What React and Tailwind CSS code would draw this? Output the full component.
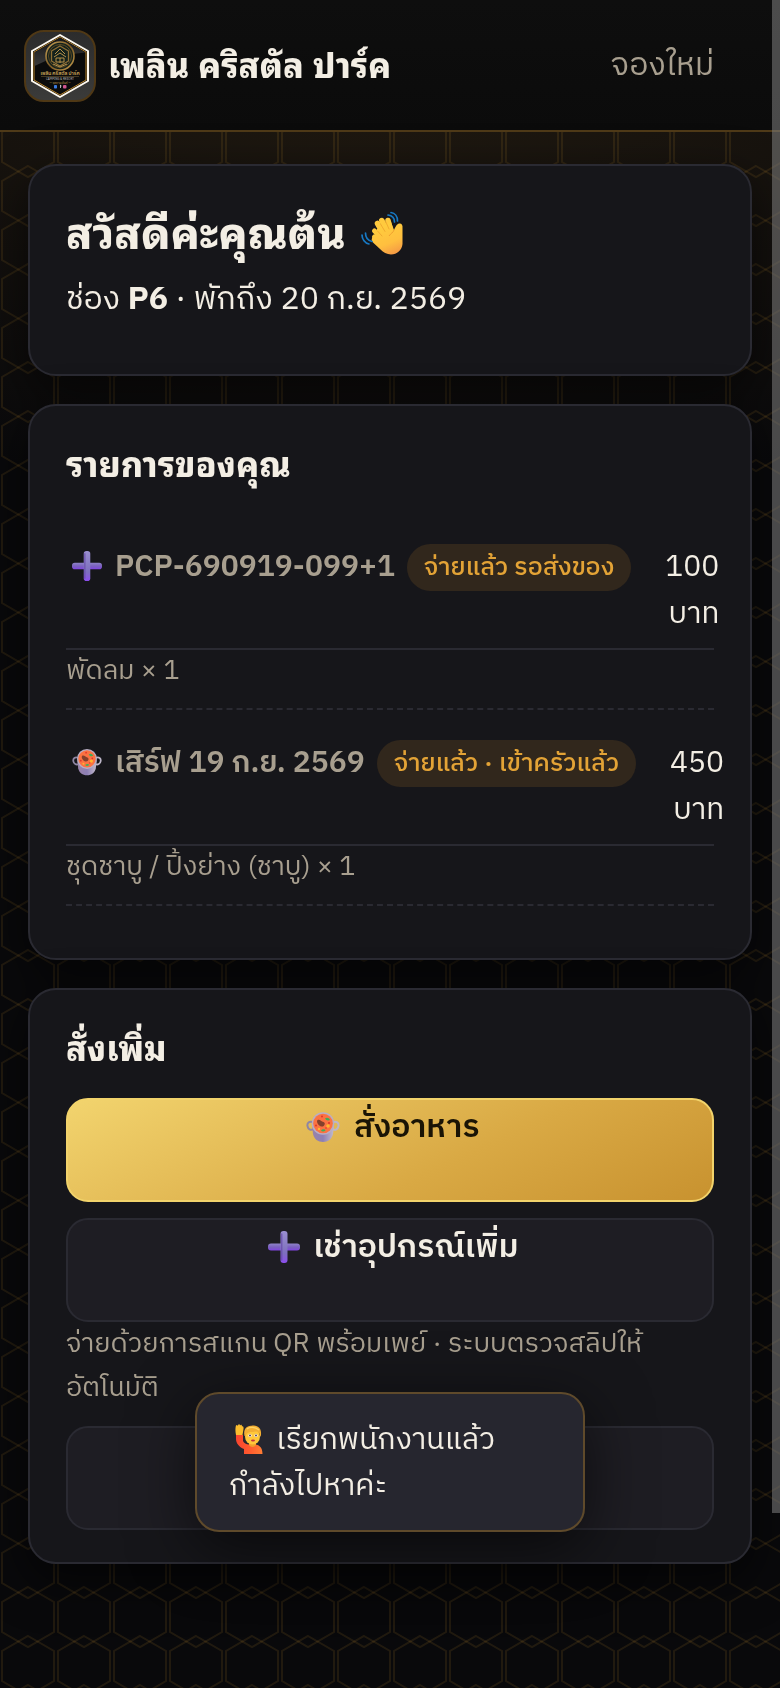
import React from 'react';

const orders = [
  {
    id: 'rental',
    icon: 'plus',
    title: 'PCP-690919-099+1',
    status: 'จ่ายแล้ว รอส่งของ',
    price: 100,
    detail: 'พัดลม × 1'
  },
  {
    id: 'food',
    icon: 'pot',
    title: 'เสิร์ฟ 19 ก.ย. 2569',
    status: 'จ่ายแล้ว · เข้าครัวแล้ว',
    price: 450,
    detail: 'ชุดชาบู / ปิ้งย่าง (ชาบู) × 1'
  }
];

function HexBackground() {
  return (
    <svg className="fixed inset-0 w-full h-full -z-10" aria-hidden="true">
      <defs>
        <pattern id="hex" width="56" height="49" patternUnits="userSpaceOnUse">
          <g fill="none" stroke="#c8902e" strokeOpacity="0.13" strokeWidth="2">
            <path d="M28 -30 L54 -15 V15 L28 30 L2 15 V-15 Z" />
            <path d="M28 19 L54 34 V64 L28 79 L2 64 V34 Z" />
          </g>
        </pattern>
      </defs>
      <rect width="100%" height="100%" fill="url(#hex)" />
    </svg>
  );
}

function Logo() {
  return (
    <svg viewBox="0 0 72 72" className="w-[72px] h-[72px] shrink-0" role="img" aria-label="โลโก้">
      <defs>
        <linearGradient id="logoBg" x1="0" y1="0" x2="0" y2="1">
          <stop offset="0" stopColor="#2c2c2c" />
          <stop offset="1" stopColor="#3b3b3a" />
        </linearGradient>
        <linearGradient id="logoGold" x1="0" y1="0" x2="1" y2="1">
          <stop offset="0" stopColor="#c9a55a" />
          <stop offset="0.5" stopColor="#7a5823" />
          <stop offset="1" stopColor="#c39c4e" />
        </linearGradient>
        <linearGradient id="logoShine" x1="0" y1="0" x2="0" y2="1">
          <stop offset="0" stopColor="#161616" />
          <stop offset="1" stopColor="#3a3a3a" />
        </linearGradient>
      </defs>
      <rect x="1" y="1" width="70" height="70" rx="19" fill="url(#logoBg)" stroke="#4f3815" strokeWidth="2" />
      <path d="M36 5 L64 21 V51 L36 67 L8 51 V21 Z" fill="#0b0b0b" stroke="#fffaf0" strokeWidth="2" strokeLinejoin="round" />
      <path d="M36 7 L62 22 V50 L36 65 L10 50 V22 Z" fill="#0b0b0b" stroke="#b5822b" strokeWidth="1" />
      <path d="M10.500 22.500 L36 7.500 L61.500 22.500 Q34 24 10.500 36 Z" fill="url(#logoShine)" />
      <circle cx="36" cy="26" r="14" fill="#14211c" stroke="url(#logoGold)" strokeWidth="1.600" />
      <circle cx="36" cy="26" r="11.500" fill="none" stroke="#6f5626" strokeWidth="0.800" />
      <path d="M36 16 L44.500 21 V31 L36 36 L27.500 31 V21 Z" fill="none" stroke="#8f6f35" strokeWidth="1.300" />
      <path d="M31 24 L36 19 L41 24 M30 27 L36 23 L42 27 M32 28 H40 V32 H32 Z M36 28 V33 M29 34 L36 37 L43 34" fill="none" stroke="#b5914b" strokeWidth="1" />
      <text x="36" y="45" textAnchor="middle" fontSize="4.800" fontWeight="600" fill="#d1a95a">เพลิน คริสตัล ปาร์ค</text>
      <path d="M17 46.500 H55" stroke="#7d6434" strokeWidth="0.500" />
      <text x="36" y="50" textAnchor="middle" fontSize="3" fill="#bdbdbd">CAMPING &amp; RESORT</text>
      <text x="36" y="53.500" textAnchor="middle" fontSize="3" fill="#c9a253">— จุดกางเต็นท์ —</text>
      <rect x="30" y="55" width="3" height="3.500" rx="0.800" fill="#3b7be0" />
      <path d="M36.500 55 V58 M36.500 55.200 L37.500 56" stroke="#fff" strokeWidth="0.700" />
      <rect x="39" y="55" width="3.500" height="3.500" rx="1" fill="#d2568f" />
    </svg>
  );
}

function WaveIcon({ className }) {
  return (
    <svg viewBox="0 0 42 44" className={className} aria-hidden="true">
      <defs>
        <linearGradient id="hand" x1="0.300" y1="0" x2="0.700" y2="1">
          <stop offset="0" stopColor="#ffcf3d" />
          <stop offset="0.650" stopColor="#ffbf3f" />
          <stop offset="1" stopColor="#f59a45" />
        </linearGradient>
      </defs>
      <g stroke="#ffca3e" strokeLinecap="round" fill="none">
        <path d="M20 26 L13.500 20" strokeWidth="5" />
        <path d="M22 22 L16.500 12.500" strokeWidth="5.500" />
        <path d="M26 20 L20.800 9.500" strokeWidth="5.500" />
        <path d="M30 21 L27 9.500" strokeWidth="5.500" />
        <path d="M19 31 L13.500 26" strokeWidth="5" />
      </g>
      <path d="M16 18 L30 11 L33 19 C34 17 35 14 37 13 C40 11.500 42 14 41.500 17 L41.500 33 C41 39 36 43.500 30 43.500 C26 43.500 22 41 19 38 L12 31.500 C9.500 29 11 25.500 14 25.500 Z" fill="url(#hand)" />
      <path d="M33 19 C32 22 30 22 28 25" stroke="#f0a030" strokeWidth="1" fill="none" />
      <path d="M16.500 20 L21 25 M19.500 13 L24 20.500 M24.500 10 L28 18" stroke="#eda32c" strokeWidth="0.800" strokeLinecap="round" fill="none" />
      <g fill="none" stroke="#1779c4" strokeWidth="1.700" strokeLinecap="round">
        <path d="M30 1.500 C34 2 36.500 5.500 36.500 10" />
        <path d="M27 4 C31 4.500 33.500 7 33.500 11" />
        <path d="M1 24 C1 28 4 32.500 8 33" />
        <path d="M4.500 22 C4.500 26 7 29.500 11 30.500" />
      </g>
    </svg>
  );
}

function PlusIcon({ className }) {
  return (
    <svg viewBox="0 0 32 32" className={className} aria-hidden="true">
      <defs>
        <linearGradient id="plusH" x1="0" y1="0" x2="0" y2="1">
          <stop offset="0" stopColor="#8f83c8" />
          <stop offset="0.500" stopColor="#7a62bd" />
          <stop offset="1" stopColor="#8044e0" />
        </linearGradient>
        <linearGradient id="plusV" x1="0" y1="0" x2="0" y2="1">
          <stop offset="0" stopColor="#9a8fd0" />
          <stop offset="0.700" stopColor="#7d6fbd" />
          <stop offset="1" stopColor="#8d4df0" />
        </linearGradient>
      </defs>
      <rect x="0" y="12.500" width="32" height="7" rx="3" fill="url(#plusH)" />
      <rect x="12.500" y="0" width="7" height="32" rx="3" fill="url(#plusV)" />
      <path d="M13.700 3 V29" stroke="#6548a8" strokeWidth="1.500" strokeLinecap="round" opacity="0.700" />
    </svg>
  );
}

function PotIcon({ className }) {
  return (
    <svg viewBox="0 0 34 30" className={className} aria-hidden="true">
      <defs>
        <linearGradient id="pot" x1="0" y1="0" x2="1" y2="0">
          <stop offset="0" stopColor="#9a83a8" />
          <stop offset="0.500" stopColor="#8d7fb5" />
          <stop offset="1" stopColor="#c3bccb" />
        </linearGradient>
      </defs>
      <path d="M8 10.500 C3 8.500 1 11 1.500 14 C2 17 4.500 19 8 17" fill="none" stroke="#8f86a3" strokeWidth="2" />
      <path d="M26 10.500 C31 8.500 33 11 32.500 14 C32 17 29.500 19 26 17" fill="none" stroke="#bdb6c8" strokeWidth="2" />
      <path d="M6 13 L7 22 C8 27 12 30 17 30 C22 30 26 27 27 22 L28 13 Z" fill="url(#pot)" />
      <circle cx="17" cy="11.500" r="11.300" fill="#b9aec4" />
      <circle cx="17" cy="11.500" r="9.800" fill="#fb7242" />
      <path d="M11.500 8 C14 7 15 9.500 17.500 10 C20 11 18.500 15 15.500 14.500 C12.500 14 10 10 11.500 8 Z" fill="#84402b" />
      <path d="M19 6.500 C21 5 23 6 24 8 C22 9 20 8.500 19 6.500 Z M15 18.500 C16.500 16.500 19 17 19.500 18.500 C18 19.800 16 19.800 15 18.500 Z" fill="#3fae58" />
      <circle cx="22" cy="14" r="1.800" fill="#ffb52e" />
      <circle cx="13" cy="17" r="1.200" fill="#ffb52e" />
      <circle cx="16" cy="4.500" r="1" fill="#e0352c" />
      <circle cx="23" cy="11" r="1" fill="#e0352c" />
      <circle cx="10" cy="13.500" r="1" fill="#e0352c" />
      <circle cx="20" cy="16" r="0.800" fill="#e0352c" />
    </svg>
  );
}

function StaffIcon({ className }) {
  return (
    <svg viewBox="0 0 28 30" className={className} aria-hidden="true">
      <defs>
        <linearGradient id="shirt" x1="0" y1="0" x2="1" y2="0">
          <stop offset="0" stopColor="#f8442f" />
          <stop offset="0.500" stopColor="#ff5a2e" />
          <stop offset="1" stopColor="#ff7d35" />
        </linearGradient>
      </defs>
      <path d="M1 11 H8 V17 C9 19 11 20.500 14 20.500 H20 C25 21 27.500 24 27.500 30 H9 V25 C4 23 1 19 1 15 Z" fill="url(#shirt)" />
      <path d="M1 11 C0 7 0.500 3 1 1.500 C1.600 0.500 2.500 0.800 2.800 2 C3.200 0 4.800 -0.300 5 1.500 C5.800 0.300 7 0.500 7 2.500 C8 2 8.800 3 8.500 5 L7.500 11 Z" fill="#fbbd2e" />
      <path d="M14 18 H21 V21 C19 23.500 16 23.500 14 21 Z" fill="#f2a02c" />
      <ellipse cx="17.500" cy="12.500" rx="7.500" ry="8" fill="#ffc83b" />
      <path d="M9.500 12 C8 5 12 1.500 16.500 1.800 C22 0.500 27 4 26 11 C25.500 13 25 13 25 12 C25 9 23 7.500 21 7.500 C16 8.500 12 7 10.800 12 Z" fill="#f3ae33" />
      <path d="M12 5 C15 2.500 20 3 24 6" stroke="#ffd364" strokeWidth="1.200" fill="none" />
      <circle cx="15" cy="11.500" r="1.600" fill="#fff" />
      <circle cx="21" cy="11.500" r="1.600" fill="#fff" />
      <circle cx="15" cy="11.500" r="0.900" fill="#4b2a3c" />
      <circle cx="21" cy="11.500" r="0.900" fill="#4b2a3c" />
      <ellipse cx="18" cy="16.500" rx="2" ry="1.100" fill="#c5313a" />
    </svg>
  );
}

function Card({ children }) {
  return (
    <section className="rounded-[28px] border-2 border-[#2a2a32] bg-[#16161a] px-9 pt-9 pb-8 shadow-[0_16px_48px_rgba(0,0,0,0.6)]">
      {children}
    </section>
  );
}

function CardTitle({ children }) {
  return (
    <h2 className='mb-8 font-["Noto_Sans_Thai_Looped","Noto_Sans",sans-serif] text-[34px] leading-[40px] font-extrabold'>
      {children}
    </h2>
  );
}

function OrderItem({ order }) {
  return (
    <li className="border-b-2 border-dashed border-[#2a2a32] pt-4 pb-4">
      <div className="flex gap-[34px] border-b-2 border-[#2a2a32] pt-3.5 pb-2.5 text-[30px] leading-[47px]">
        <div className="flex shrink-0 items-start gap-3 whitespace-nowrap">
          <span className="font-semibold text-[#a89f8f]">
            {order.icon === 'plus' ? (
              <PlusIcon className="inline-block w-[30px] h-[30px] mx-1.5 -mt-1" />
            ) : (
              <PotIcon className="inline-block w-[30px] h-[28px] mx-1.5 -mt-1" />
            )}{' '}
            {order.title}
          </span>
          <span className="rounded-full bg-[#31271c] px-[17px] text-[25px] font-medium text-[#e3a336]">
            {order.status}
          </span>
        </div>
        <span className="w-min shrink-0 text-right">{order.price} บาท</span>
      </div>
      <p className="text-[27px] leading-[42px] text-[#a89f8f]">{order.detail}</p>
    </li>
  );
}

export default function App() {
  return (
    <div className='relative isolate min-h-screen bg-[#09090b] bg-[radial-gradient(130%_500px_at_50%_0,#241c11,transparent)] bg-no-repeat font-["IBM_Plex_Sans_Thai","Noto_Sans_Thai","Noto_Sans",sans-serif] text-[#f3eee4]'>
      <HexBackground />

      {/* Header */}
      <header className="flex items-center gap-3 border-b-2 border-[#4f3a18] bg-linear-to-b from-[#0e0e0e] to-[#0b0b0b] pt-[30px] pr-[66px] pb-7 pl-6">
        <Logo />
        <span className='flex-1 pb-1.5 font-["Noto_Sans_Thai_Looped","Noto_Sans",sans-serif] text-[34px] leading-[48px] font-extrabold'>
          เพลิน คริสตัล ปาร์ค
        </span>
        <a href="#book" className="text-[32px] leading-[48px] text-[#a89f8f]">จองใหม่</a>
      </header>

      <main className="flex flex-col gap-7 px-7 pt-8 pb-[124px]">
        <Card>
          <h1 className='mb-3.5 font-["Noto_Sans_Thai_Looped","Noto_Sans",sans-serif] text-[43px] leading-[56px] font-extrabold'>
            สวัสดีค่ะคุณต้น <WaveIcon className="inline-block w-[42px] h-[44px] ml-1 -mt-2" />
          </h1>
          <p className="mb-3.5 text-[32px] leading-[56px]">
            ช่อง <b>P6</b> · พักถึง 20 ก.ย. 2569
          </p>
        </Card>

        <Card>
          <CardTitle>รายการของคุณ</CardTitle>
          <ul className="mb-5">
            {orders.map((order) => (
              <OrderItem key={order.id} order={order} />
            ))}
          </ul>
        </Card>

        <Card>
          <CardTitle>สั่งเพิ่ม</CardTitle>
          <div className="flex flex-col gap-4 text-[32px] leading-[56px] font-semibold">
            <a href="#food" className="block min-h-[104px] rounded-[22px] border-2 border-[#f2d36b] bg-linear-155 from-[#f2d46e] via-[#d9a944] via-60% to-[#c8922f] text-center text-[#1a1405]">
              <PotIcon className="inline-block w-[34px] h-[30px] mx-1.5 -mt-1" /> สั่งอาหาร
            </a>
            <a href="#rent" className="block min-h-[104px] rounded-[22px] border-2 border-[#2a2a32] bg-[#1e1d23] text-center">
              <PlusIcon className="inline-block w-8 h-8 mx-1.5 -mt-1" /> เช่าอุปกรณ์เพิ่ม
            </a>
          </div>
          <p className="mb-4 text-[27px] leading-[44px] text-[#a89f8f]">
            จ่ายด้วยการสแกน QR พร้อมเพย์ · ระบบตรวจสลิปให้อัตโนมัติ
          </p>
          <button type="button" aria-label="เรียกพนักงาน" className="block w-full h-[104px] rounded-[22px] border-2 border-[#2a2a32] bg-[#1e1d23]" />
        </Card>
      </main>

      {/* Toast */}
      <div role="status" className="fixed bottom-[156px] left-1/2 w-1/2 -translate-x-1/2 rounded-[24px] border-2 border-[#5f4a2b] bg-[#26262f] px-8 pt-6 pb-5 text-[30px] leading-[46px] shadow-[0_16px_64px_rgba(0,0,0,0.6)]">
        <StaffIcon className="inline-block w-7 h-[30px] mx-1.5 -mt-1" /> เรียกพนักงานแล้ว กำลังไปหาค่ะ
      </div>

      {/* Scroll thumb */}
      <div className="fixed top-0 right-0 h-[1513px] w-2 bg-[#808080]/55" aria-hidden="true" />
    </div>
  );
}
